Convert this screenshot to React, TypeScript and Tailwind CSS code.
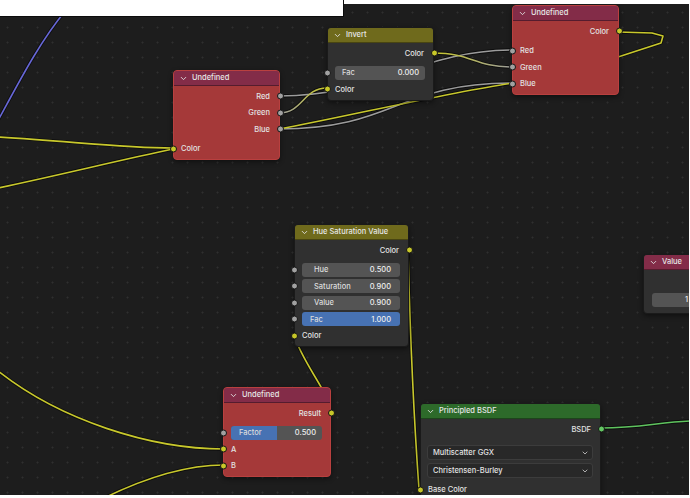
import { ChevronDown } from "lucide-react";
import type { ReactNode } from "react";

const YEL = "bg-[#c7c729]";
const GRY = "bg-[#a1a1a1]";
const GRN = "bg-[#63c763]";

function Socket({ side, color }: { side: "l" | "r"; color: string }) {
  return (
    <span
      className={`absolute top-1/2 h-[7px] w-[7px] -translate-y-1/2 rounded-full border border-[#151515] ${
        side === "l" ? "-left-[4.5px]" : "-right-[4.5px]"
      } ${color}`}
    />
  );
}

function Node({
  className,
  head,
  body,
  title,
  children,
}: {
  className: string;
  head: string;
  body: string;
  title: string;
  children: ReactNode;
}) {
  return (
    <div className={`absolute rounded-[4px] border shadow-[0_2px_5px_rgba(0,0,0,0.45)] ${body} ${className}`}>
      <div className={`flex h-[15px] items-center gap-[4px] rounded-t-[3px] border-b border-black/35 pl-[5px] ${head}`}>
        <ChevronDown size={9} strokeWidth={2.4} className="text-[#e0e0e0]" />
        <span className="text-[#e6e6e6]">{title}</span>
      </div>
      <div className="flex flex-col pt-[2px] pb-[2px]">{children}</div>
    </div>
  );
}

function Out({ label, color }: { label: string; color: string }) {
  return (
    <div className="relative flex h-[16.5px] items-center justify-end pr-[9px]">
      {label}
      <Socket side="r" color={color} />
    </div>
  );
}

function In({ label, color }: { label: string; color: string }) {
  return (
    <div className="relative flex h-[16.5px] items-center pl-[7px]">
      {label}
      <Socket side="l" color={color} />
    </div>
  );
}

function Gap() {
  return <div className="h-[3px]" />;
}

function Field({
  label,
  value,
  blue,
  pl = "pl-[12px]",
  pr = "pr-[9px]",
}: {
  label: string;
  value: string;
  blue?: boolean;
  pl?: string;
  pr?: string;
}) {
  return (
    <div className="relative flex h-[16.5px] items-center pl-[7px] pr-[8px]">
      <Socket side="l" color={GRY} />
      <div
        className={`flex h-[14px] flex-1 items-center justify-between rounded-[3px] ${pl} ${pr} ${
          blue ? "bg-[#4772b3]" : "bg-[#545454]"
        }`}
      >
        <span className="text-[#dcdcdc]">{label}</span>
        <span className="text-[#eeeeee]">{value}</span>
      </div>
    </div>
  );
}

function Select({ label }: { label: string }) {
  return (
    <div className="flex h-[18px] items-center pl-[6px] pr-[7px]">
      <div className="flex h-[15px] flex-1 items-center justify-between rounded-[3px] border border-[#3c3c3c] bg-[#282828] pl-[5px] pr-[3px]">
        <span>{label}</span>
        <ChevronDown size={8} strokeWidth={2.4} className="text-[#cfcfcf]" />
      </div>
    </div>
  );
}

type Link = { d: string; c: string };

const links: Link[] = [
  { d: "M-6 128 C 18 84, 38 44, 66 10", c: "#6767d6" },
  { d: "M-2 137 C 70 141, 120 148, 173 148", c: "#c8c82c" },
  { d: "M-2 188 C 60 175, 120 160, 173 149", c: "#c8c82c" },
  { d: "M279 96 C 380 96, 420 50, 513 50", c: "#9c9c9c" },
  { d: "M279 129 C 396 129, 396 83, 513 83", c: "#9c9c9c" },
  { d: "M279 129 C 340 118, 450 92, 513 83", c: "#c8c82c" },
  { d: "M618 32 L652 33 L663 36 L661 43 L618 57", c: "#c8c82c" },
  { d: "M408 250 C 410 330, 414 420, 419 489", c: "#c8c82c" },
  { d: "M294 335 C 300 355, 315 375, 326 396", c: "#c8c82c" },
  { d: "M-2 371 C 60 420, 150 449, 224 449", c: "#c8c82c" },
  { d: "M100 500 C 150 475, 190 465, 224 465", c: "#c8c82c" },
  { d: "M601 428 C 640 428, 660 422, 692 421", c: "#5fc45f" },
];

function Links() {
  return (
    <svg className="absolute inset-0 h-full w-full" viewBox="0 0 690 498" fill="none">
      <defs>
        <linearGradient id="g1" gradientUnits="userSpaceOnUse" x1="279" y1="113" x2="327" y2="88">
          <stop offset="0" stopColor="#9c9c9c" />
          <stop offset="1" stopColor="#c8c82c" />
        </linearGradient>
        <linearGradient id="g2" gradientUnits="userSpaceOnUse" x1="433" y1="53" x2="513" y2="67">
          <stop offset="0" stopColor="#c8c82c" />
          <stop offset="1" stopColor="#9c9c9c" />
        </linearGradient>
      </defs>
      {links.map((l, i) => (
        <path key={`o${i}`} d={l.d} stroke="#000" strokeOpacity={0.55} strokeWidth={3.4} strokeLinejoin="round" />
      ))}
      <path d="M279 113 C 303 113, 303 88, 327 88" stroke="#000" strokeOpacity={0.55} strokeWidth={3.4} />
      <path d="M433 53 C 473 53, 473 67, 513 67" stroke="#000" strokeOpacity={0.55} strokeWidth={3.4} />
      {links.map((l, i) => (
        <path key={`c${i}`} d={l.d} stroke={l.c} strokeWidth={1.6} strokeLinejoin="round" />
      ))}
      <path d="M279 113 C 303 113, 303 88, 327 88" stroke="url(#g1)" strokeWidth={1.6} />
      <path d="M433 53 C 473 53, 473 67, 513 67" stroke="url(#g2)" strokeWidth={1.6} />
    </svg>
  );
}

export default function App() {
  const red = "bg-[#a53939] border-[#b9403f]";
  const dark = "bg-[#303030] border-[#1a1a1a]";
  const maroon = "bg-[#832c48]";
  const olive = "bg-[#6f6a1c]";
  const green = "bg-[#2d6a2a]";

  return (
    <div className="relative h-[498px] w-[690px] overflow-hidden bg-[#1d1d1d] bg-[radial-gradient(circle,#2f2f2f_0.9px,transparent_1.1px)] bg-[size:15px_15px] bg-[position:0_5px] font-['Inter','Liberation_Sans',sans-serif] text-[7.5px] font-medium leading-none text-[#e2e2e2]">
      <Links />

      <Node className="left-[173px] top-[70px] w-[107px]" head={maroon} body={red} title="Undefined">
        <Out label="Red" color={GRY} />
        <Out label="Green" color={GRY} />
        <Out label="Blue" color={GRY} />
        <Gap />
        <In label="Color" color={YEL} />
      </Node>

      <Node className="left-[327px] top-[27px] w-[107px]" head={olive} body={dark} title="Invert">
        <Out label="Color" color={YEL} />
        <Gap />
        <Field label="Fac" value="0.000" pl="pl-[7px]" pr="pr-[6px]" />
        <In label="Color" color={YEL} />
      </Node>

      <Node className="left-[512px] top-[5px] w-[107px]" head={maroon} body={red} title="Undefined">
        <Out label="Color" color={YEL} />
        <Gap />
        <In label="Red" color={GRY} />
        <In label="Green" color={GRY} />
        <In label="Blue" color={GRY} />
      </Node>

      <Node className="left-[294px] top-[224px] w-[115px]" head={olive} body={dark} title="Hue Saturation Value">
        <Out label="Color" color={YEL} />
        <Gap />
        <Field label="Hue" value="0.500" />
        <Field label="Saturation" value="0.900" />
        <Field label="Value" value="0.900" />
        <Field label="Fac" value="1.000" blue pl="pl-[8px]" />
        <In label="Color" color={YEL} />
      </Node>

      <Node className="left-[223px] top-[387px] w-[108px]" head={maroon} body={red} title="Undefined">
        <Out label="Result" color={YEL} />
        <Gap />
        <div className="relative flex h-[16.5px] items-center pl-[7px] pr-[8px]">
          <Socket side="l" color={GRY} />
          <div className="flex h-[14px] flex-1 overflow-hidden rounded-[3px] bg-[#545454]">
            <div className="flex w-1/2 items-center bg-[#4772b3] pl-[8px] text-[#dcdcdc]">Factor</div>
            <div className="flex flex-1 items-center justify-end pr-[6px] text-[#eeeeee]">0.500</div>
          </div>
        </div>
        <In label="A" color={YEL} />
        <In label="B" color={YEL} />
      </Node>

      <Node className="left-[420px] top-[403px] w-[181px]" head={green} body={dark} title="Principled BSDF">
        <Out label="BSDF" color={GRN} />
        <div className="h-[6px]" />
        <Select label="Multiscatter GGX" />
        <Select label="Christensen-Burley" />
        <div className="h-[2px]" />
        <In label="Base Color" color={YEL} />
        <div className="h-[20px]" />
      </Node>

      <Node className="left-[643px] top-[254px] w-[120px]" head={maroon} body={dark} title="Value">
        <Out label="" color={GRY} />
        <div className="flex h-[22px] items-center pl-[8px] pr-[8px]">
          <div className="flex h-[14px] flex-1 items-center rounded-[3px] bg-[#545454] pl-[33px] text-[#eeeeee]">1</div>
        </div>
      </Node>

      {/* screenshot edges */}
      <div className="absolute left-0 top-0 h-[4px] w-full bg-white" />
      <div className="absolute left-0 top-0 h-[17px] w-[344px] border-b border-r border-[#0c0c0c] bg-white" />
      <div className="absolute right-0 top-0 h-full w-[1px] bg-white" />
      <div className="absolute bottom-0 left-0 h-[3px] w-full bg-white" />
    </div>
  );
}
